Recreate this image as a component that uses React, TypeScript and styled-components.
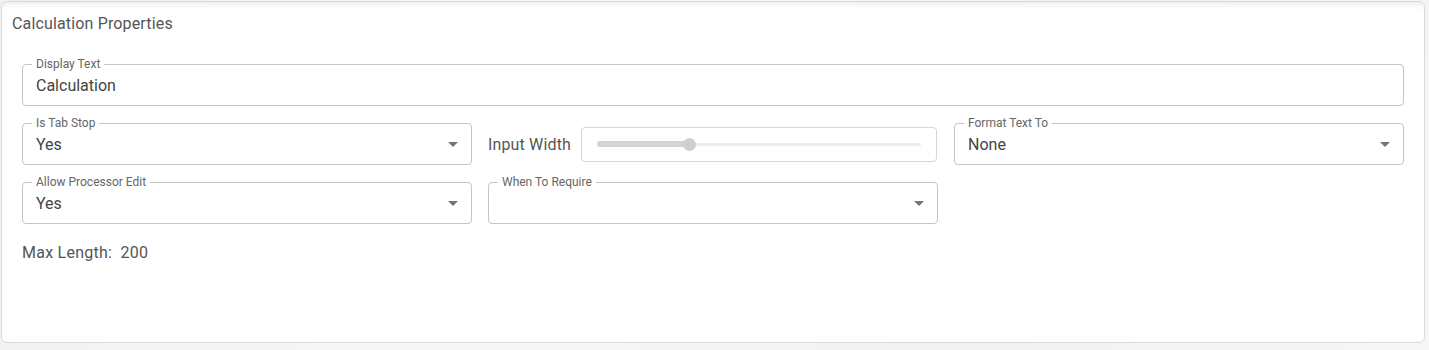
import React from "react";
import styled, { createGlobalStyle } from "styled-components";

const GlobalStyle = createGlobalStyle`
  html, body {
    margin: 0;
    padding: 0;
    background: #f3f3f3;
    font-family: Roboto, "Noto Sans", "Liberation Sans", sans-serif;
  }
`;

const Page = styled.div`
  padding: 1px 4px 7px 1px;
  background: linear-gradient(115deg, #f1f1f1 0%, #f7f7f7 40%, #f2f2f2 70%, #f6f6f6 100%);
`;

const Card = styled.section`
  box-sizing: border-box;
  height: 342px;
  background: #fff;
  border: 1px solid #dadada;
  border-radius: 6px;
  box-shadow: inset 0 8px 8px -8px rgba(0, 0, 0, 0.12);
  padding: 12px 10px 0 10px;
`;

const Title = styled.h2`
  margin: 0;
  font-size: 16px;
  line-height: 20px;
  font-weight: 400;
  letter-spacing: 0.15px;
  color: #555;
`;

const Body = styled.div`
  padding: 30px 10px 0 10px;
  display: flex;
  flex-direction: column;
  gap: 17px;
`;

const Row = styled.div`
  display: grid;
  grid-template-columns: repeat(3, 1fr);
  gap: 16px;
`;

const Outline = styled.div<{ $span?: number }>`
  position: relative;
  box-sizing: border-box;
  height: 42px;
  grid-column: span ${(p) => p.$span ?? 1};
  border: 1px solid #c4c4c4;
  border-radius: 4px;
  display: flex;
  align-items: center;
  padding: 0 14px 0 13px;
`;

const Label = styled.span`
  position: absolute;
  top: -8px;
  left: 9px;
  padding: 0 4px;
  background: #fff;
  font-size: 12px;
  line-height: 14px;
  color: #666;
`;

const Value = styled.span`
  flex: 1;
  font-size: 16px;
  color: #444;
`;

const Arrow = styled.svg`
  width: 24px;
  height: 24px;
  fill: #757575;
  margin-right: -8px;
`;

const SliderCell = styled.div`
  display: flex;
  align-items: center;
  gap: 10px;
`;

const SliderLabel = styled.span`
  font-size: 16px;
  letter-spacing: 0.15px;
  color: #555;
  white-space: nowrap;
`;

const SliderBox = styled.div`
  flex: 1;
  box-sizing: border-box;
  height: 35px;
  margin-right: 1px;
  border: 1px solid #d6d6d6;
  border-radius: 4px;
  padding: 0 15px;
  display: flex;
  align-items: center;
`;

const Track = styled.div`
  position: relative;
  flex: 1;
  height: 3px;
  border-radius: 2px;
  background: #ededed;
`;

const Fill = styled.div`
  position: absolute;
  left: 0;
  top: -1.5px;
  height: 6px;
  border-radius: 3px;
  background: #d3d3d3;
`;

const Thumb = styled.div`
  position: absolute;
  top: 50%;
  width: 13px;
  height: 13px;
  margin: -6.5px 0 0 -6.5px;
  border-radius: 50%;
  background: #cfcfcf;
`;

const MaxLength = styled.div`
  margin-top: 2px;
  font-size: 16px;
  line-height: 20px;
  letter-spacing: 0.25px;
  color: #555;
`;

function SelectField({ label, value }: { label: string; value?: string }) {
  return (
    <Outline>
      <Label>{label}</Label>
      <Value>{value}</Value>
      <Arrow viewBox="0 0 24 24">
        <path d="M7 10l5 5 5-5z" />
      </Arrow>
    </Outline>
  );
}

function WidthSlider({ percent }: { percent: number }) {
  return (
    <SliderCell>
      <SliderLabel>Input Width</SliderLabel>
      <SliderBox>
        <Track>
          <Fill style={{ width: `${percent}%` }} />
          <Thumb style={{ left: `${percent}%` }} />
        </Track>
      </SliderBox>
    </SliderCell>
  );
}

export default function App() {
  return (
    <>
      <GlobalStyle />
      <Page>
        <Card>
          <Title>Calculation Properties</Title>
          <Body>
            <Row>
              <Outline $span={3}>
                <Label>Display Text</Label>
                <Value>Calculation</Value>
              </Outline>
            </Row>
            <Row>
              <SelectField label="Is Tab Stop" value="Yes" />
              <WidthSlider percent={28.6} />
              <SelectField label="Format Text To" value="None" />
            </Row>
            <Row>
              <SelectField label="Allow Processor Edit" value="Yes" />
              <SelectField label="When To Require" />
            </Row>
            <MaxLength>Max Length:&nbsp; 200</MaxLength>
          </Body>
        </Card>
      </Page>
    </>
  );
}
